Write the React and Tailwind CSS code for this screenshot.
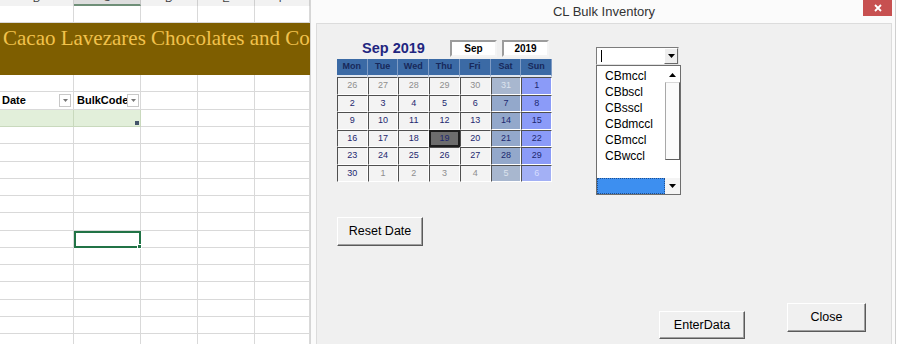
import React from "react";

// column widths of the visible sheet (B..F)
const colW = ["w-[74px]", "w-[67px]", "w-[57px]", "w-[57px]", "w-[55px]"];
const letters = ["B", "C", "D", "E", "F"];

const DownTri = ({ color = "#000" }) => (
  <svg width="7" height="4" viewBox="0 0 7 4">
    <path d="M0 0h7L3.5 4z" fill={color} />
  </svg>
);

const UpTri = ({ color = "#000" }) => (
  <svg width="7" height="4" viewBox="0 0 7 4">
    <path d="M0 4h7L3.5 0z" fill={color} />
  </svg>
);

function FilterBtn() {
  return (
    <div className="flex h-[13px] w-[12px] shrink-0 items-center justify-center border border-[#c8c8c8] bg-white">
      <svg width="5" height="3" viewBox="0 0 5 3">
        <path d="M0 0h5L2.5 3z" fill="#777" />
      </svg>
    </div>
  );
}

function BlankRow({ h, selected }) {
  return (
    <div className={`flex shrink-0 ${h}`}>
      {colW.map((w, i) =>
        selected && i === 1 ? (
          <div key={i} className={`${w} relative shrink-0 border-2 border-[#217346]`}>
            <div className="absolute -bottom-[3px] -right-[3px] h-[5px] w-[5px] border border-white bg-[#217346]" />
          </div>
        ) : (
          <div key={i} className={`${w} shrink-0 border-b border-r border-[#d9d9d9]`} />
        )
      )}
    </div>
  );
}

function Sheet() {
  return (
    <div className="flex w-[310px] shrink-0 flex-col overflow-hidden bg-white">
      {/* column headers, mostly scrolled off the top */}
      <div className="flex h-[6px] shrink-0">
        {letters.map((l, i) => (
          <div
            key={l}
            className={
              l === "C"
                ? `${colW[i]} flex shrink-0 items-end justify-center overflow-hidden border-b-2 border-r border-b-[#6f8f78] border-r-[#c6c6c6] bg-[#dedede] pb-[1px]`
                : `${colW[i]} flex shrink-0 items-end justify-center overflow-hidden border-r border-[#cfcfcf] bg-[#f2f2f2] pb-[2px]`
            }
          >
            <span className="shrink-0 text-[11px] leading-[11px] text-[#444]">{l}</span>
          </div>
        ))}
      </div>

      <BlankRow h="h-[17px]" />

      <div className="flex h-[52px] shrink-0 overflow-hidden whitespace-nowrap bg-[#7e5e00] pl-[3px] pt-[3px]">
        <span className="text-[21px] leading-[25px] text-[#f2c24c]" style={{ fontFamily: '"Liberation Serif", serif' }}>
          Cacao Lavezares Chocolates and Co
        </span>
      </div>

      <BlankRow h="h-[17px]" />

      {/* table header */}
      <div className="flex h-[18px] shrink-0">
        <div className="flex w-[74px] shrink-0 items-center border-b border-r border-[#d9d9d9] pl-[2px] pr-[2px]">
          <span className="flex-1 overflow-hidden whitespace-nowrap text-[11px] font-bold text-black">Date</span>
          <FilterBtn />
        </div>
        <div className="flex w-[67px] shrink-0 items-center border-b border-r border-[#d9d9d9] pl-[3px] pr-[1px]">
          <span className="flex-1 overflow-hidden whitespace-nowrap text-[11px] font-bold text-black">BulkCode</span>
          <FilterBtn />
        </div>
        <div className="w-[57px] shrink-0 border-b border-r border-[#d9d9d9]" />
        <div className="w-[57px] shrink-0 border-b border-r border-[#d9d9d9]" />
        <div className="w-[55px] shrink-0 border-b border-r border-[#d9d9d9]" />
      </div>

      {/* first table data row */}
      <div className="flex h-[17px] shrink-0">
        <div className="w-[74px] shrink-0 border-b border-r border-[#c9d9bd] bg-[#e2efda]" />
        <div className="flex w-[67px] shrink-0 items-end justify-end border-b border-r border-[#c9d9bd] bg-[#e2efda] pb-[1px] pr-[1px]">
          <div className="h-[4px] w-[4px] bg-[#44546a]" />
        </div>
        <div className="w-[57px] shrink-0 border-b border-r border-[#d9d9d9]" />
        <div className="w-[57px] shrink-0 border-b border-r border-[#d9d9d9]" />
        <div className="w-[55px] shrink-0 border-b border-r border-[#d9d9d9]" />
      </div>

      {Array.from({ length: 13 }).map((_, r) => (
        <BlankRow key={r} h="h-[17.25px]" selected={r === 6} />
      ))}
    </div>
  );
}

const heads = ["Mon", "Tue", "Wed", "Thu", "Fri", "Sat", "Sun"];

// [day, kind]  c = current month, o = other month, s = selected
const weeks = [
  [[26, "o"], [27, "o"], [28, "o"], [29, "o"], [30, "o"], [31, "o"], [1, "c"]],
  [[2, "c"], [3, "c"], [4, "c"], [5, "c"], [6, "c"], [7, "c"], [8, "c"]],
  [[9, "c"], [10, "c"], [11, "c"], [12, "c"], [13, "c"], [14, "c"], [15, "c"]],
  [[16, "c"], [17, "c"], [18, "c"], [19, "s"], [20, "c"], [21, "c"], [22, "c"]],
  [[23, "c"], [24, "c"], [25, "c"], [26, "c"], [27, "c"], [28, "c"], [29, "c"]],
  [[30, "c"], [1, "o"], [2, "o"], [3, "o"], [4, "o"], [5, "o"], [6, "o"]],
];

function dayClass(col, kind) {
  if (kind === "s") return "bg-[#6d6d6d] text-[#1d2870] border-2 border-[#1e1e1e]";
  const edge = "border-t border-l border-b border-r border-t-[#4f4f4f] border-l-[#4f4f4f] border-b-white border-r-white";
  if (col === 5) {
    return kind === "c"
      ? `${edge} bg-[#93a8cb] text-[#1d2870]`
      : `${edge} bg-[#a8b7cf] text-[#dde3ee]`;
  }
  if (col === 6) {
    return kind === "c"
      ? `${edge} bg-[#8b9bf8] text-[#1d2870]`
      : `${edge} bg-[#a3b0f5] text-[#d6ddff]`;
  }
  return kind === "c"
    ? `${edge} bg-[#f3f3f3] text-[#1d2870]`
    : `${edge} bg-[#f3f3f3] text-[#8e8e8e]`;
}

function Calendar() {
  return (
    <div className="flex w-[215px] shrink-0 flex-col">
      <div className="flex h-[19px] items-start">
        <div className="w-[113px] text-center text-[14.5px] font-bold leading-[17px] text-[#1f2680]">Sep 2019</div>
        <div className="flex h-[17px] w-[47px] items-center justify-center border-2 border-b-[#f4f4f4] border-l-[#9c9c9c] border-r-[#f4f4f4] border-t-[#9c9c9c] bg-white text-[10px] font-bold text-black">
          Sep
        </div>
        <div className="ml-[5px] flex h-[17px] w-[47px] items-center justify-center border-2 border-b-[#f4f4f4] border-l-[#9c9c9c] border-r-[#f4f4f4] border-t-[#9c9c9c] bg-white text-[10px] font-bold text-black">
          2019
        </div>
      </div>
      <div className="grid grid-cols-7">
        {heads.map((h) => (
          <div
            key={h}
            className="flex h-[18px] items-center justify-center border-b-2 border-r border-b-[#dfe6f0] border-r-[#7e9bc4] bg-[#3b6aa5] text-[9px] font-bold text-[#17285a]"
          >
            {h}
          </div>
        ))}
        {weeks.map((w, r) =>
          w.map(([d, k], c) => (
            <div key={`${r}-${c}`} className={`flex h-[17.5px] items-center justify-center text-[9px] ${dayClass(c, k)}`}>
              {d}
            </div>
          ))
        )}
      </div>
    </div>
  );
}

const items = ["CBmccl", "CBbscl", "CBsscl", "CBdmccl", "CBmccl", "CBwccl"];

function Combo() {
  return (
    <div className="ml-[44px] mt-[7px] flex w-[85px] shrink-0 flex-col">
      <div className="flex h-[18px] w-[83px] border border-b-[#e2e2e2] border-l-[#7c7c7c] border-r-[#e2e2e2] border-t-[#7c7c7c] bg-white">
        <div className="flex flex-1 items-center pl-[4px]">
          <div className="h-[12px] w-[1px] bg-black" />
        </div>
        <div className="flex w-[14px] items-center justify-center border border-b-[#6a6a6a] border-l-white border-r-[#6a6a6a] border-t-white bg-[#eeeeee]">
          <DownTri />
        </div>
      </div>
      <div className="flex h-[130px] flex-col border border-[#6e6e6e] bg-white">
        <div className="flex flex-1">
          <div className="flex flex-1 flex-col pl-[8px] pt-[2px] text-[12px] leading-[16px] text-black">
            {items.map((t, i) => (
              <div key={i}>{t}</div>
            ))}
          </div>
          <div className="flex w-[15px] flex-col pt-[1px]">
            <div className="flex h-[15px] items-center justify-center">
              <UpTri />
            </div>
            <div className="h-[78px] border border-b-[#5e5e5e] border-l-[#a8a8a8] border-r-[#5e5e5e] border-t-[#d8d8d8] bg-[#fbfbfb]" />
          </div>
        </div>
        <div className="flex h-[16px]">
          <div className="flex-1 border border-dotted border-[#1f4f8f] bg-[#3d8ff0]" />
          <div className="flex w-[15px] items-center justify-center bg-[#f4f4f4]">
            <DownTri />
          </div>
        </div>
      </div>
    </div>
  );
}

function WinButton({ label, className }) {
  return (
    <button
      className={`flex items-center justify-center border border-b-[#5a5a5a] border-l-white border-r-[#5a5a5a] border-t-white bg-[#f0f0f0] text-[12.5px] text-black shadow-[inset_-1px_-1px_0_#a0a0a0] ${className}`}
    >
      {label}
    </button>
  );
}

function Dialog() {
  return (
    <div className="flex w-[585px] shrink-0 flex-col border-l border-[#d6d6d6] bg-[#fbfbfb] pl-[5px] pr-[3px]">
      <div className="flex h-[23px] shrink-0 items-start">
        <div className="w-[29px]" />
        <div className="flex-1 text-center text-[13px] leading-[23px] text-[#333]">CL Bulk Inventory</div>
        <div className="flex h-[16px] w-[29px] items-center justify-center bg-[#c75050]">
          <svg width="8" height="8" viewBox="0 0 8 8">
            <path d="M1 1l6 6M7 1L1 7" stroke="#fff" strokeWidth="1.8" />
          </svg>
        </div>
      </div>
      <div className="flex flex-1 flex-col border border-b-0 border-[#dcdcdc] bg-[#f0f0f0]">
        <div className="flex items-start pl-[20px] pt-[16px]">
          <Calendar />
          <Combo />
        </div>
        <WinButton label="Reset Date" className="ml-[20px] mt-[22px] h-[29px] w-[86px]" />
        <div className="mt-[57px] flex items-start justify-end pr-[25px]">
          <WinButton label="EnterData" className="mt-[8px] h-[28px] w-[86px]" />
          <WinButton label="Close" className="ml-[42px] h-[29px] w-[79px]" />
        </div>
      </div>
    </div>
  );
}

export default function App() {
  return (
    <div
      className="flex h-[344px] w-[900px] overflow-hidden bg-white"
      style={{ fontFamily: '"Liberation Sans", Arial, sans-serif' }}
    >
      <Sheet />
      <Dialog />
      <div className="w-[5px] shrink-0 border-l border-[#cfcfcf] bg-white" />
    </div>
  );
}
